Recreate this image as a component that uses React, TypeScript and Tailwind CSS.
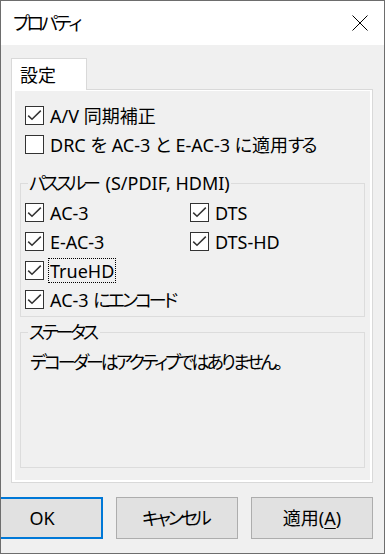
import React from "react";

const FONT = "font-['Noto_Sans','Noto_Sans_CJK_JP',sans-serif] [font-feature-settings:'palt']";

function J({ t }: { t: string }) {
  const parts = t.split(/([\u3040-\u30ff\u3001\u3002]+)/);
  return (
    <>
      {parts.map((p, i) =>
        i % 2 === 1 ? (
          <React.Fragment key={i}>
            <span className="tracking-[-3px]">{p.slice(0, -1)}</span>
            {p.slice(-1)}
          </React.Fragment>
        ) : (
          <React.Fragment key={i}>{p}</React.Fragment>
        )
      )}
    </>
  );
}

function Box({ checked }: { checked: boolean }) {
  return (
    <span className="w-[19px] h-[19px] border border-[#333333] bg-white shrink-0 flex items-center justify-center">
      {checked && (
        <svg width="17" height="17" viewBox="0 0 17 17">
          <path d="M2.2 8.6 L6 12.3 L14.8 3.6" fill="none" stroke="#333333" strokeWidth="1.5" />
        </svg>
      )}
    </span>
  );
}

function Check({ label, checked = true, focus = false }: { label: string; checked?: boolean; focus?: boolean }) {
  return (
    <div className="h-[29px] flex items-center">
      <Box checked={checked} />
      <span
        className={
          "ml-[4px] px-[1px] h-[25px] flex items-center leading-[22px] border whitespace-pre " +
          (focus ? "border-dotted border-black" : "border-transparent")
        }
      >
        <J t={label} />
      </span>
    </div>
  );
}

export default function App() {
  return (
    <div className={`w-[385px] h-[554px] border border-[#6d6d6d] bg-[#f0f0f0] overflow-hidden flex flex-col text-[18px] text-black ${FONT}`}>
      {/* title bar */}
      <div className="h-[44px] bg-white flex items-center justify-between pl-[12px] pr-[16px] shrink-0">
        <span className="leading-[22px]">
          <J t="プロパティ" />
        </span>
        <svg width="16" height="16" viewBox="0 0 16 16">
          <path d="M0.5 0.5 L15.5 15.5 M15.5 0.5 L0.5 15.5" stroke="#000" strokeWidth="1" fill="none" />
        </svg>
      </div>

      {/* tab */}
      <div className="ml-[10px] mt-[13px] w-[76px] h-[32px] -mb-[1px] relative z-10 bg-white border-l border-t border-r border-[#d9d9d9] pl-[8px] pt-[5px] leading-[22px] shrink-0">
        設定
      </div>

      {/* page */}
      <div className="ml-[10px] w-[362px] h-[394px] border border-[#d9d9d9] bg-white pt-[1px] pl-[3px] pr-[2px] pb-[2px] shrink-0">
        <div className="h-full bg-[#f0f0f0] flex flex-col pt-[10px]">
          <div className="pl-[10px] flex flex-col">
            <Check label="A/V 同期補正" />
            <Check label="DRC を AC-3 と E-AC-3 に適用する" checked={false} />
          </div>

          <fieldset className="mx-[5px] mt-[13px] border border-[#dcdcdc] pl-[4px] pr-[4px] pt-[4px] pb-[2px]">
            <legend className="ml-[3px] px-[1px] leading-[22px] whitespace-pre">
              <J t="パススルー (S/PDIF, HDMI)" />
            </legend>
            <div className="grid grid-cols-[165px_1fr]">
              <Check label="AC-3" />
              <Check label="DTS" />
              <Check label="E-AC-3" />
              <Check label="DTS-HD" />
              <Check label="TrueHD" focus />
              <div />
              <div className="col-span-2">
                <Check label="AC-3 にエンコード" />
              </div>
            </div>
          </fieldset>

          <fieldset className="mx-[5px] mt-[4px] mb-[12px] flex-1 min-h-0 border border-[#dcdcdc] pl-[9px] pt-[8px]">
            <legend className="ml-[-2px] px-[1px] leading-[22px]">
              <J t="ステータス" />
            </legend>
            <div className="leading-[22px]">
              <J t="デコーダーはアクティブではありません。" />
            </div>
          </fieldset>
        </div>
      </div>

      {/* buttons */}
      <div className="mt-[14px] h-[42px] flex justify-end gap-[13px] pr-[11px] shrink-0">
        <button className="w-[122px] h-[42px] shrink-0 bg-[#e1e1e1] border-2 border-[#0078d7] leading-[22px]">OK</button>
        <button className="w-[122px] h-[42px] shrink-0 bg-[#e1e1e1] border border-[#adadad] leading-[22px]">
          <J t="キャンセル" />
        </button>
        <button className="w-[122px] h-[42px] shrink-0 bg-[#e1e1e1] border border-[#adadad] leading-[22px]">
          適用(<span className="underline underline-offset-[3px]">A</span>)
        </button>
      </div>
    </div>
  );
}
